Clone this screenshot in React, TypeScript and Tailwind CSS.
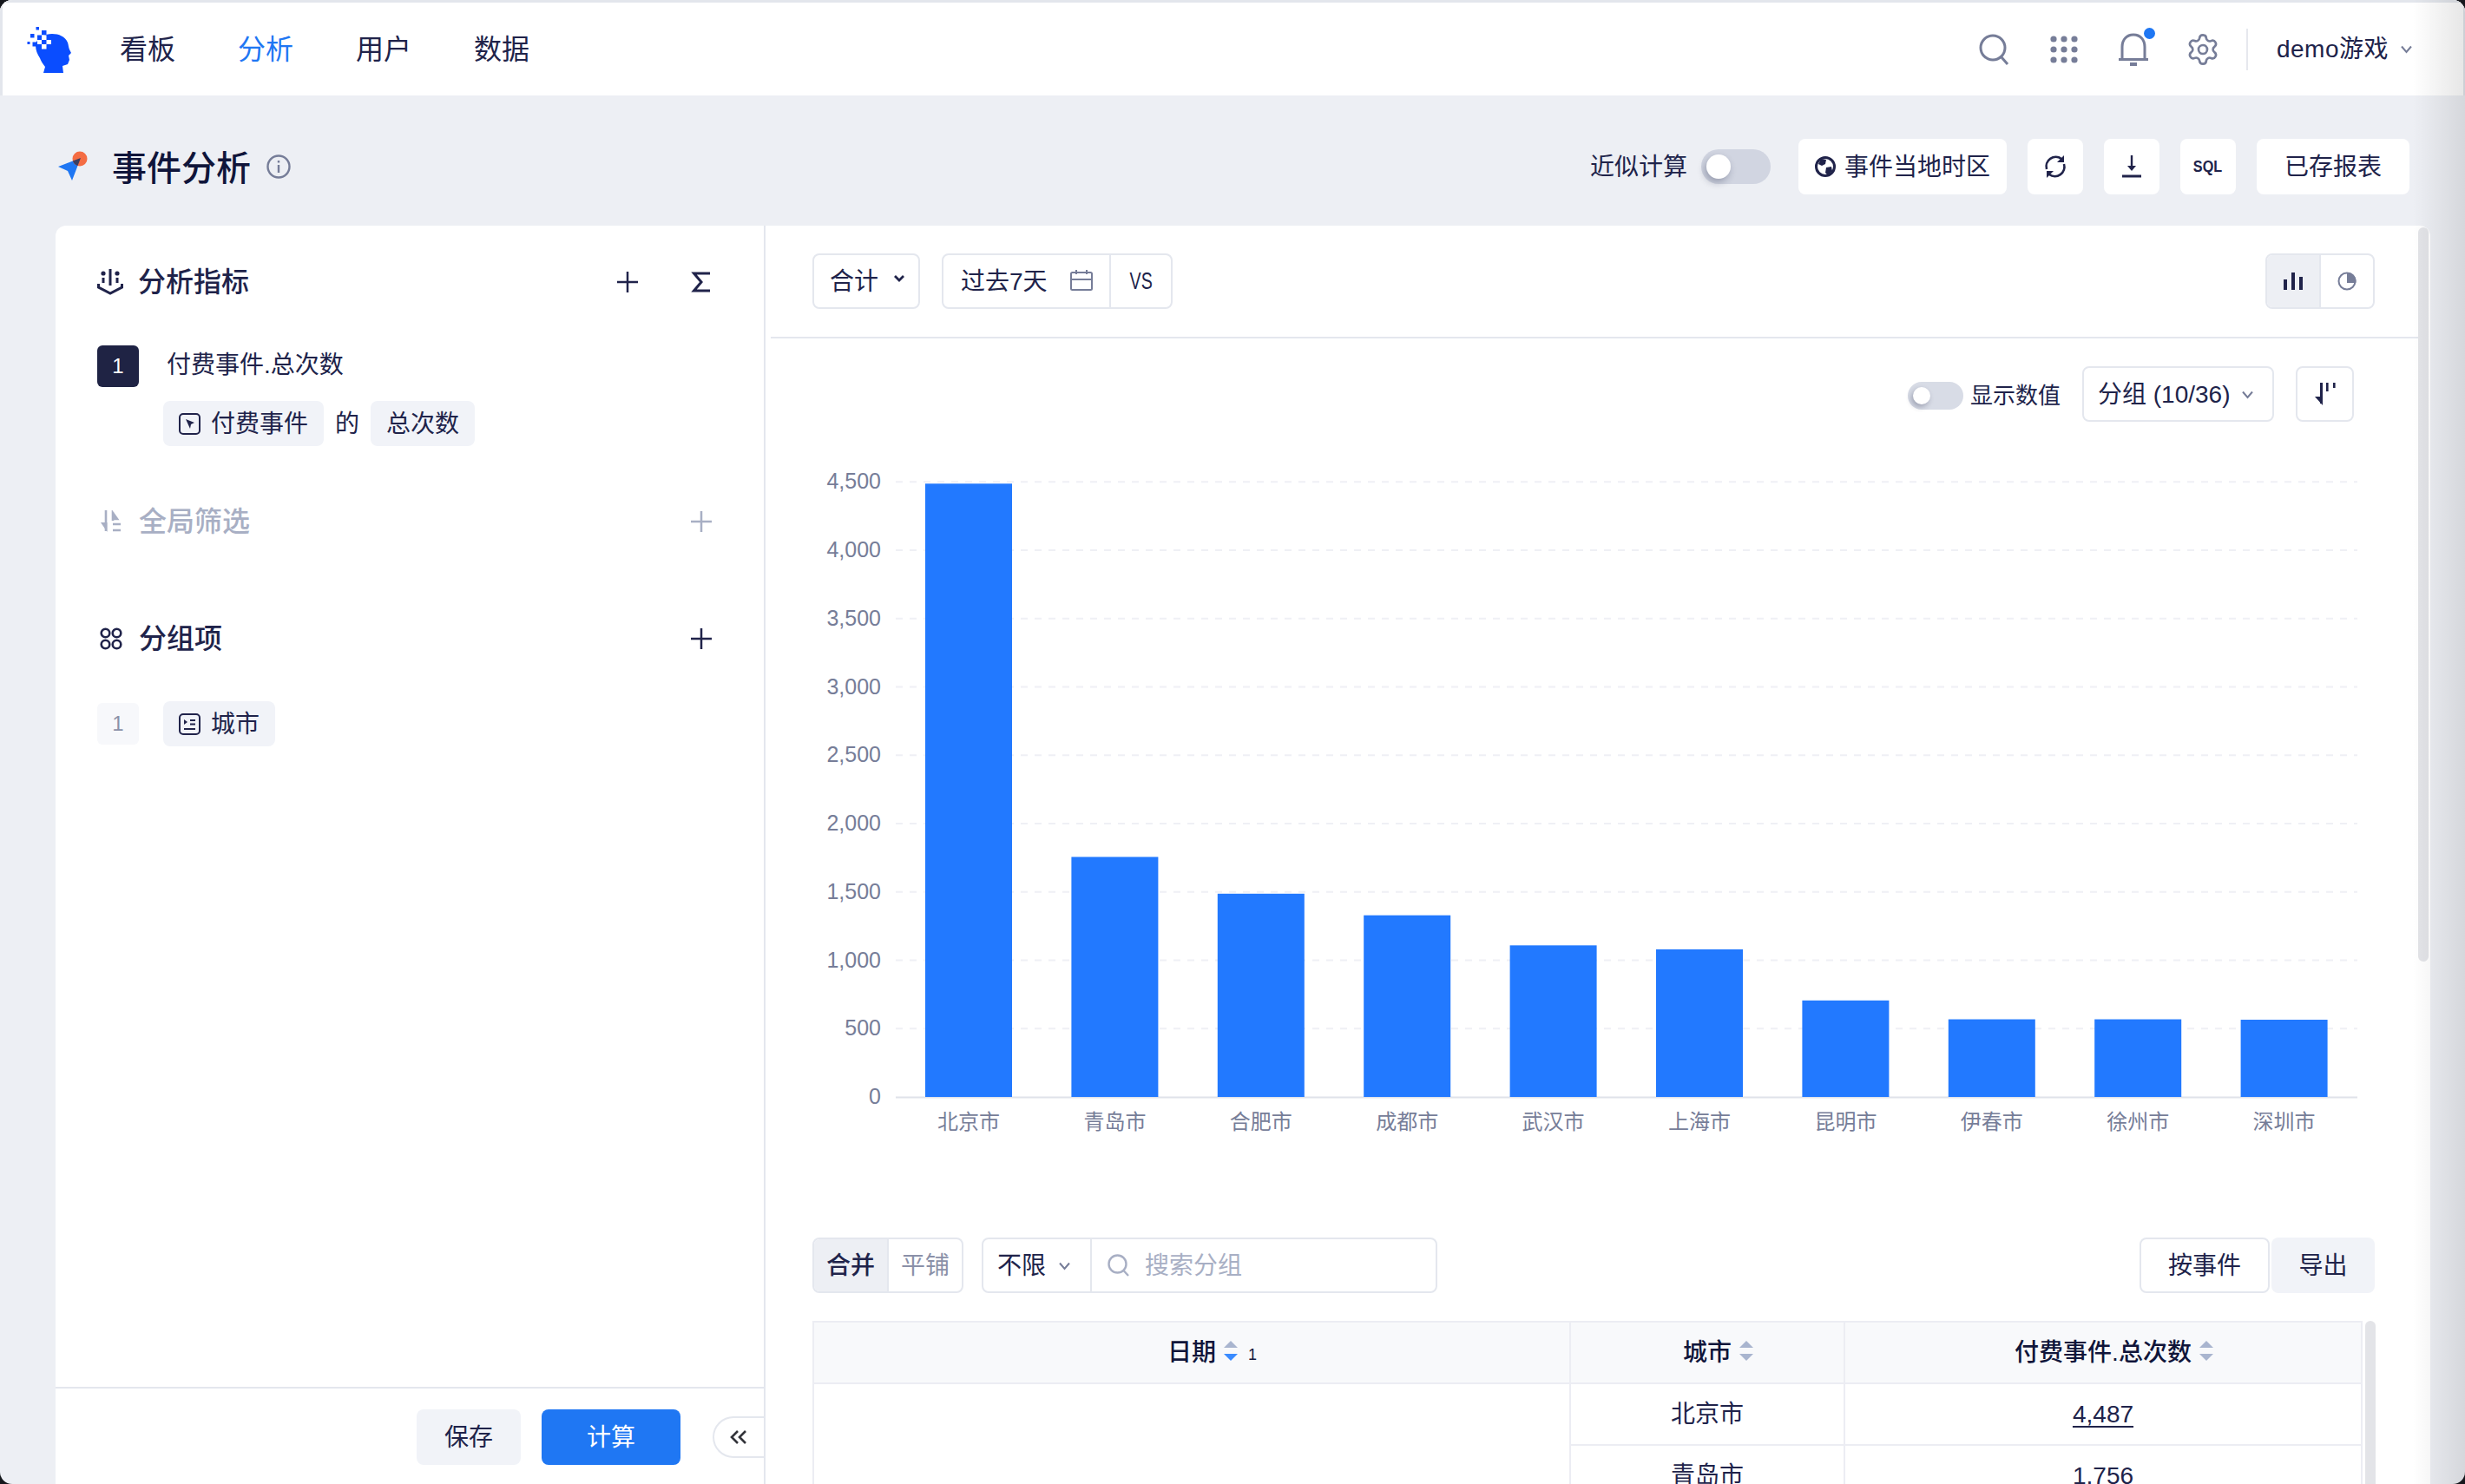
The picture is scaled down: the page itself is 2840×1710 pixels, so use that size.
import { ReactNode } from 'react';
import { Settings } from 'lucide-react';

const axis = [4500, 4000, 3500, 3000, 2500, 2000, 1500, 1000, 500];
const bars = [
  { city: '北京市', value: 4487 },
  { city: '青岛市', value: 1756 },
  { city: '合肥市', value: 1487 },
  { city: '成都市', value: 1329 },
  { city: '武汉市', value: 1109 },
  { city: '上海市', value: 1080 },
  { city: '昆明市', value: 706 },
  { city: '伊春市', value: 568 },
  { city: '徐州市', value: 568 },
  { city: '深圳市', value: 565 },
];

const Logo = () => (
  <svg width="52" height="54" viewBox="31 28 52 54" className="shrink-0">
    <path d="M41 50C42 41 52 37 60 37C68 37 75 40 78 47C79 50 79 53 80 55L82 59L79 62L80 67L78 72L72 74L73 82H50L52 75C49 71 47 68 46 65C43 60 41 56 41 50Z" fill="#0a4dff" />
    <g fill="#0a4dff">
      <rect x="41.5" y="29" width="3.5" height="3.5" />
      <rect x="35" y="37" width="4.5" height="4.5" />
      <rect x="31.5" y="46" width="3" height="3" />
      <rect x="37.5" y="46.5" width="5" height="5" />
      <rect x="48" y="33" width="5.5" height="5.5" />
      <rect x="43" y="38.5" width="5.5" height="5.5" />
    </g>
    <g fill="#fff">
      <rect x="48" y="38.5" width="5.5" height="5.5" />
      <rect x="43" y="44" width="5" height="5" />
      <rect x="53.5" y="44" width="5.5" height="5" />
      <rect x="48" y="49" width="5.5" height="5.5" />
    </g>
  </svg>
);

const EventIcon = () => (
  <svg width="36" height="36" viewBox="0 0 36 36" className="shrink-0">
    <defs>
      <clipPath id="dot">
        <circle cx="26" cy="9" r="8.5" />
      </clipPath>
    </defs>
    <path d="M1 18L27 8L17 34L12 23Z" fill="#1f77f3" />
    <circle cx="26" cy="9" r="8.5" fill="#f46c43" />
    <path d="M1 18L27 8L17 34L12 23Z" fill="#3a3f63" clipPath="url(#dot)" />
  </svg>
);

const Plus = ({ color = '#20234a' }: { color?: string }) => (
  <svg width="24" height="24" viewBox="0 0 24 24" fill="none" stroke={color} strokeWidth="2.5">
    <path d="M12 0V24M0 12H24" />
  </svg>
);

const Chevron = ({ color = '#767d98', size = 15 }: { color?: string; size?: number }) => (
  <svg width={size} height={size} viewBox="0 0 15 15" fill="none" stroke={color} strokeWidth="2" className="shrink-0">
    <path d="M2 4.5L7.5 11L13 4.5" />
  </svg>
);

const SortCarets = ({ active = false }: { active?: boolean }) => (
  <svg width="16" height="24" viewBox="0 0 16 24" className="shrink-0">
    <path d="M8 0L16 8H0Z" fill="#a9b5cf" />
    <path d="M0 15H16L8 23Z" fill={active ? '#3a8bff' : '#a9b5cf'} />
  </svg>
);

// header label stays centred in its column, the carets hang off its right side
const HeadCell = ({ label, active, order }: { label: string; active?: boolean; order?: string }) => (
  <th className="border-2 border-[#ecedf3] font-medium">
    <span className="relative inline-block">
      {label}
      <span className="absolute top-[7px] left-full ml-[9px] flex items-start">
        <SortCarets active={active} />
        {order && <span className="mt-[4px] ml-[12px] text-[18px] leading-[24px] font-normal">{order}</span>}
      </span>
    </span>
  </th>
);

const Chip = ({ icon, children }: { icon?: ReactNode; children: ReactNode }) => (
  <div className="flex h-[52px] items-center gap-[12px] rounded-[8px] bg-[#f1f3f8] px-[18px]">
    {icon}
    <span className="pt-[2px]">{children}</span>
  </div>
);

const WhiteBtn = ({ children, className }: { children: ReactNode; className: string }) => (
  <div className={`flex h-[64px] items-center justify-center rounded-[8px] bg-white ${className}`}>{children}</div>
);

const Chart = () => {
  const yOf = (v: number) => 1264 - v * 0.1575;
  return (
    <svg width="1904" height="790" viewBox="882 530 1904 790" className="block shrink-0">
      {axis.map((v) => (
        <g key={v}>
          <line x1="1032" x2="2716" y1={yOf(v)} y2={yOf(v)} stroke="#eff0f5" strokeWidth="2" strokeDasharray="8 8" />
          <text x="1015" y={yOf(v) + 8} textAnchor="end" fontSize="25" fill="#767d98">
            {v.toLocaleString('en-US')}
          </text>
        </g>
      ))}
      <text x="1015" y="1272" textAnchor="end" fontSize="25" fill="#767d98">0</text>
      <line x1="1032" x2="2716" y1="1264.5" y2="1264.5" stroke="#dfe2ea" strokeWidth="2" />
      {bars.map((b, i) => {
        const cx = 1116 + i * 168.4;
        return (
          <g key={b.city}>
            <rect x={cx - 50} y={yOf(b.value)} width="100" height={b.value * 0.1575} fill="#2279ff" />
            <text x={cx} y="1301" textAnchor="middle" fontSize="24" fill="#767d98">{b.city}</text>
          </g>
        );
      })}
    </svg>
  );
};

export default function App() {
  return (
    <div className="relative h-[1710px] w-[2840px] overflow-hidden bg-[#16181d] font-['Liberation_Sans','Noto_Sans_CJK_SC',sans-serif] text-[28px] text-[#20234a]">
      <div className="flex h-full flex-col overflow-hidden rounded-[14px] bg-[#edeff4]">
        {/* Top bar */}
        <header className="flex h-[110px] shrink-0 items-center border-t-[3px] border-r-2 border-l-[3px] border-[#e3e6ec] bg-white pr-[58px]">
          <div className="ml-[28px]">
            <Logo />
          </div>
          <nav className="ml-[55px] flex gap-[72px] text-[32px]">
            <span>看板</span>
            <span className="text-[#1f77f3]">分析</span>
            <span>用户</span>
            <span>数据</span>
          </nav>
          <div className="ml-auto flex items-center">
            <div className="flex w-[80px] justify-center">
              <svg width="36" height="36" viewBox="0 0 36 36" fill="none" stroke="#767d98" strokeWidth="3">
                <circle cx="16" cy="16" r="14" />
                <path d="M26 27L33 35" />
              </svg>
            </div>
            <div className="flex w-[80px] justify-center">
              <svg width="32" height="32" viewBox="0 0 32 32" fill="#767d98">
                {[4, 16, 28].map((y) =>
                  [4, 16, 28].map((x) => <circle key={`${x}-${y}`} cx={x} cy={y} r="3.6" />),
                )}
              </svg>
            </div>
            <div className="relative flex w-[80px] justify-center">
              <svg width="36" height="38" viewBox="0 0 36 38" fill="none" stroke="#767d98" strokeWidth="3">
                <path d="M5 30V16C5 8 10 2 18 2C26 2 31 8 31 16V30" />
                <path d="M1 30.5H35" />
                <path d="M14 36H22" strokeWidth="4" />
              </svg>
              <span className="absolute top-[-6px] left-[52px] h-[13px] w-[13px] rounded-full bg-[#1f77f3]" />
            </div>
            <div className="flex w-[80px] justify-center">
              <Settings size={40} strokeWidth={1.6} color="#767d98" />
            </div>
            <div className="ml-[10px] h-[48px] w-[2px] bg-[#e6e8ee]" />
            <span className="ml-[33px] tracking-[0.5px]">demo游戏</span>
            <div className="ml-[13px]">
              <Chevron />
            </div>
          </div>
        </header>

        {/* Title row */}
        <div className="flex h-[150px] shrink-0 items-center pt-[14px] pr-[64px] pl-[66px]">
          <EventIcon />
          <h1 className="mt-[4px] ml-[27px] text-[40px] font-medium text-[#10153a]">事件分析</h1>
          <svg width="28" height="28" viewBox="0 0 28 28" fill="none" stroke="#767d98" strokeWidth="2.4" className="ml-[18px]">
            <circle cx="14" cy="14" r="12.5" />
            <path d="M14 12V21M14 7V9.5" />
          </svg>
          <div className="ml-auto flex items-center">
            <span className="pt-[2px]">近似计算</span>
            <div className="ml-[16px] flex h-[40px] w-[80px] items-center rounded-full bg-[#d1d5e1] pl-[6px]">
              <span className="h-[28px] w-[28px] rounded-full bg-white shadow-[-2px_4px_8px_rgba(20,25,60,0.3)]" />
            </div>
            <WhiteBtn className="ml-[32px] w-[240px] gap-[10px]">
              <svg width="24" height="24" viewBox="0 0 24 24">
                <circle cx="12" cy="12" r="10.5" fill="none" stroke="#20234a" strokeWidth="3" />
                <path d="M7 3L13 4L12 9L8 11L4 9Z M13 13L19 12L20 17L15 22L12 19Z" fill="#20234a" />
              </svg>
              <span className="pt-[2px]">事件当地时区</span>
            </WhiteBtn>
            <WhiteBtn className="ml-[24px] w-[64px]">
              <svg width="28" height="28" viewBox="0 0 28 28" fill="none" stroke="#20234a" strokeWidth="2.6">
                <path d="M4 17A11 11 0 0 1 21 5" />
                <path d="M24 11A11 11 0 0 1 7 23" />
                <path d="M24 1V9H16Z M4 27V19H12Z" fill="#20234a" stroke="none" />
              </svg>
            </WhiteBtn>
            <WhiteBtn className="ml-[24px] w-[64px]">
              <svg width="24" height="26" viewBox="0 0 24 26" fill="none" stroke="#20234a" strokeWidth="2.4">
                <path d="M12 0V15" />
                <path d="M7 12H17L12 18Z" fill="#20234a" stroke="none" />
                <path d="M1 24H23" strokeWidth="3" />
              </svg>
            </WhiteBtn>
            <WhiteBtn className="ml-[24px] w-[64px]">
              <span className="scale-x-90 text-[18px] font-bold">SQL</span>
            </WhiteBtn>
            <WhiteBtn className="ml-[24px] w-[176px] pt-[2px]">已存报表</WhiteBtn>
          </div>
        </div>

        {/* Panels */}
        <main className="ml-[64px] flex min-h-0 w-[2736px] flex-1 overflow-hidden rounded-t-[12px] bg-white">
          {/* Left panel */}
          <aside className="flex w-[818px] shrink-0 flex-col border-r-2 border-[#e4e7ee]">
            <div className="flex-1 pt-[45px] pr-[60px] pl-[48px]">
              <div className="flex h-[40px] items-center text-[32px] font-medium">
                <svg width="30" height="30" viewBox="0 0 30 30" fill="none" stroke="#20234a" strokeWidth="3" className="shrink-0">
                  <path d="M15 0V19" />
                  <path d="M1.5 17V21L15 28L28.5 21V17" />
                  <circle cx="7" cy="5" r="2.6" fill="#20234a" stroke="none" />
                  <circle cx="23" cy="5" r="2.6" fill="#20234a" stroke="none" />
                  <path d="M7 10V16M23 10V16" />
                </svg>
                <span className="ml-[17px]">分析指标</span>
                <div className="ml-auto">
                  <Plus />
                </div>
                <svg width="24" height="24" viewBox="0 0 24 24" fill="none" stroke="#20234a" strokeWidth="3" className="ml-[61px]">
                  <path d="M22 2H3.5L12 12L3.5 22H22" />
                </svg>
              </div>
              <div className="mt-[53px] flex items-center">
                <div className="flex h-[48px] w-[48px] items-center justify-center rounded-[6px] bg-[#1f2344] text-[24px] text-white">1</div>
                <span className="mt-[-2px] ml-[32px]">付费事件.总次数</span>
              </div>
              <div className="mt-[16px] ml-[76px] flex items-center">
                <Chip
                  icon={
                    <svg width="25" height="25" viewBox="0 0 25 25" fill="none" stroke="#20234a" strokeWidth="2" className="shrink-0">
                      <rect x="1" y="1" width="23" height="23" rx="4" />
                      <path d="M8 7L18 11L14 13L13 18Z" fill="#20234a" stroke="none" />
                    </svg>
                  }
                >
                  付费事件
                </Chip>
                <span className="ml-[13px] pt-[2px]">的</span>
                <div className="ml-[13px]">
                  <Chip>总次数</Chip>
                </div>
              </div>

              <div className="mt-[67px] flex h-[40px] items-center text-[32px] font-medium text-[#a8afc4]">
                <svg width="26" height="26" viewBox="0 0 26 26" fill="none" stroke="#a8afc4" strokeWidth="2.6" className="ml-[3px] shrink-0">
                  <path d="M7 0V24" />
                  <path d="M8.5 14V25L1 14Z" fill="#a8afc4" stroke="none" />
                  <path d="M15 2V12M15 3L20 10H15Z" fill="#a8afc4" />
                  <path d="M15 16H24M15 23H24" />
                </svg>
                <span className="ml-[19px]">全局筛选</span>
                <div className="ml-auto">
                  <Plus color="#a8afc4" />
                </div>
              </div>

              <div className="mt-[95px] flex h-[40px] items-center text-[32px] font-medium">
                <svg width="26" height="26" viewBox="0 0 26 26" fill="none" stroke="#20234a" strokeWidth="2.6" className="ml-[3px] shrink-0">
                  <circle cx="6.5" cy="6.5" r="4.8" />
                  <circle cx="19.5" cy="6.5" r="4.8" />
                  <circle cx="6.5" cy="19.5" r="4.8" />
                  <circle cx="19.5" cy="19.5" r="4.8" />
                </svg>
                <span className="ml-[19px]">分组项</span>
                <div className="ml-auto">
                  <Plus />
                </div>
              </div>
              <div className="mt-[52px] flex items-center">
                <div className="flex h-[48px] w-[48px] items-center justify-center rounded-[6px] bg-[#f7f8fb] text-[24px] text-[#8a90a8]">1</div>
                <div className="ml-[28px]">
                  <Chip
                    icon={
                      <svg width="25" height="25" viewBox="0 0 25 25" fill="none" stroke="#20234a" strokeWidth="2" className="shrink-0">
                        <rect x="1" y="1" width="23" height="23" rx="4" />
                        <path d="M6 7L10 10L6 13Z" fill="#20234a" stroke="none" />
                        <path d="M13 8H19M13 12.5H19M6 18H19" />
                      </svg>
                    }
                  >
                    城市
                  </Chip>
                </div>
              </div>
            </div>

            <div className="flex h-[112px] shrink-0 justify-end border-t-2 border-[#e4e7ee] pt-[24px]">
              <div className="flex h-[64px] w-[120px] items-center justify-center rounded-[8px] bg-[#f1f3f8] pt-[2px]">保存</div>
              <div className="ml-[24px] flex h-[64px] w-[160px] items-center justify-center rounded-[8px] bg-[#1f77f3] pt-[2px] text-white">计算</div>
              <div className="mt-[8px] ml-[37px] flex h-[48px] w-[59px] items-center justify-center rounded-l-full border-2 border-r-0 border-[#e4e7ee] pr-[2px]">
                <svg width="20" height="20" viewBox="0 0 20 20" fill="none" stroke="#33343a" strokeWidth="2.6">
                  <path d="M9 3L2 10L9 17M18 3L11 10L18 17" />
                </svg>
              </div>
            </div>
          </aside>

          {/* Right panel */}
          <section className="flex min-w-0 flex-1">
            <div className="flex w-[1904px] shrink-0 flex-col">
              <div className="ml-[6px] flex h-[130px] shrink-0 items-start border-b-2 border-[#e4e7ee] pt-[32px] pr-[50px] pl-[48px]">
                <div className="flex h-[64px] w-[124px] items-center rounded-[8px] border-2 border-[#e4e7ee] pl-[18px]">
                  <span className="pt-[2px]">合计</span>
                  <svg width="12" height="10" viewBox="0 0 12 10" fill="none" stroke="#20234a" strokeWidth="2.8" className="mb-[6px] ml-[18px]">
                    <path d="M1 2L6 7L11 2" />
                  </svg>
                </div>
                <div className="ml-[25px] flex h-[64px] w-[266px] items-center rounded-[8px] border-2 border-[#e4e7ee]">
                  <div className="flex h-full w-[193px] items-center border-r-2 border-[#e4e7ee] pl-[20px]">
                    <span className="pt-[2px]">过去7天</span>
                    <svg width="26" height="24" viewBox="0 0 26 24" fill="none" stroke="#767d98" strokeWidth="2" className="mb-[2px] ml-[26px]">
                      <rect x="1" y="3" width="24" height="20" rx="1.5" />
                      <path d="M1 11H25M7 0V5M19 0V5" />
                    </svg>
                  </div>
                  <div className="flex flex-1 items-center justify-center">
                    <span className="scale-x-[0.7]">VS</span>
                  </div>
                </div>
                <div className="ml-auto flex h-[64px] w-[126px] overflow-hidden rounded-[8px] border-2 border-[#e4e7ee]">
                  <div className="flex w-[62px] items-center justify-center border-r-2 border-[#e4e7ee] bg-[#edeff4]">
                    <svg width="22" height="20" viewBox="0 0 22 20" fill="#20234a">
                      <rect x="0" y="8" width="4" height="12" />
                      <rect x="9" y="0" width="4" height="20" />
                      <rect x="18" y="5" width="4" height="15" />
                    </svg>
                  </div>
                  <div className="flex flex-1 items-center justify-center">
                    <svg width="22" height="22" viewBox="0 0 22 22" fill="none" stroke="#767d98" strokeWidth="2">
                      <circle cx="11" cy="11" r="9.5" />
                      <path d="M12 2A9 9 0 0 1 20.5 12H12Z" fill="#767d98" />
                    </svg>
                  </div>
                </div>
              </div>

              <div className="flex h-[140px] shrink-0 items-start justify-end pt-[32px] pr-[74px]">
                <div className="mt-[18px] flex h-[32px] w-[64px] items-center rounded-full bg-[#d8dce6] pl-[6px]">
                  <span className="h-[20px] w-[20px] rounded-full bg-white shadow-[-2px_3px_6px_rgba(20,25,60,0.3)]" />
                </div>
                <span className="mt-[18px] ml-[8px] text-[26px] leading-[32px]">显示数值</span>
                <div className="ml-[25px] flex h-[64px] w-[221px] items-center rounded-[8px] border-2 border-[#e4e7ee] pl-[16px]">
                  <span className="pt-[2px]">分组 (10/36)</span>
                  <div className="ml-[12px]">
                    <Chevron />
                  </div>
                </div>
                <div className="ml-[25px] flex h-[64px] w-[67px] items-center justify-center rounded-[8px] border-2 border-[#e4e7ee]">
                  <svg width="24" height="26" viewBox="0 0 24 26" fill="#20234a">
                    <rect x="6" y="0" width="3" height="24" />
                    <path d="M0 16H9V26Z" />
                    <rect x="13" y="0" width="2.6" height="10" />
                    <rect x="21" y="0" width="2.6" height="6" />
                  </svg>
                </div>
              </div>

              <Chart />

              <div className="mt-[106px] flex shrink-0 pr-[50px] pl-[54px]">
                <div className="flex h-[64px] w-[174px] overflow-hidden rounded-[8px] border-2 border-[#e4e7ee]">
                  <div className="flex w-[86px] items-center justify-center border-r-2 border-[#e4e7ee] bg-[#edeff4] pt-[2px] font-medium">合并</div>
                  <div className="flex flex-1 items-center justify-center pt-[2px] text-[#8a90a8]">平铺</div>
                </div>
                <div className="ml-[21px] flex h-[64px] w-[525px] items-center rounded-[8px] border-2 border-[#e4e7ee]">
                  <div className="flex h-full w-[125px] items-center border-r-2 border-[#e4e7ee] pl-[16px]">
                    <span className="pt-[2px]">不限</span>
                    <div className="ml-[14px]">
                      <Chevron />
                    </div>
                  </div>
                  <svg width="26" height="26" viewBox="0 0 26 26" fill="none" stroke="#a8afc4" strokeWidth="2.4" className="ml-[18px]">
                    <circle cx="11.5" cy="11.5" r="10" />
                    <path d="M18.5 19L24 25" />
                  </svg>
                  <span className="ml-[17px] pt-[2px] text-[#a8afc4]">搜索分组</span>
                </div>
                <div className="ml-auto flex h-[64px] w-[150px] items-center justify-center rounded-[8px] border-2 border-[#e4e7ee] pt-[2px]">按事件</div>
                <div className="ml-[2px] flex h-[64px] w-[119px] items-center justify-center rounded-[8px] bg-[#f1f3f8] pt-[2px]">导出</div>
              </div>

              <div className="mt-[32px] ml-[54px] flex shrink-0 items-start">
                <table className="w-[1784px] table-fixed border-collapse">
                  <colgroup>
                    <col className="w-[872px]" />
                    <col className="w-[316px]" />
                    <col className="w-[596px]" />
                  </colgroup>
                  <thead>
                    <tr className="h-[71px] bg-[#f8f9fb] text-[#10153a]">
                      <HeadCell label="日期" active order="1" />
                      <HeadCell label="城市" />
                      <HeadCell label="付费事件.总次数" />
                    </tr>
                  </thead>
                  <tbody className="text-center">
                    <tr className="h-[71px]">
                      <td rowSpan={2} className="border-2 border-[#ecedf3]" />
                      <td className="border-2 border-[#ecedf3]">北京市</td>
                      <td className="border-2 border-[#ecedf3] underline underline-offset-[4px]">4,487</td>
                    </tr>
                    <tr className="h-[72px]">
                      <td className="border-2 border-[#ecedf3]">青岛市</td>
                      <td className="border-2 border-[#ecedf3]">1,756</td>
                    </tr>
                  </tbody>
                </table>
                <div className="ml-[3px] h-[300px] w-[12px] rounded-full bg-[#e3e4e8]" />
              </div>
            </div>
            <div className="mt-[2px] h-[846px] w-[12px] shrink-0 rounded-full bg-[#e3e4e8]" />
          </section>
        </main>
      </div>
      {/* window edge shadow */}
      <div className="pointer-events-none absolute inset-y-0 right-0 w-[60px] rounded-r-[14px] bg-linear-to-r from-transparent to-black/10" />
    </div>
  );
}
